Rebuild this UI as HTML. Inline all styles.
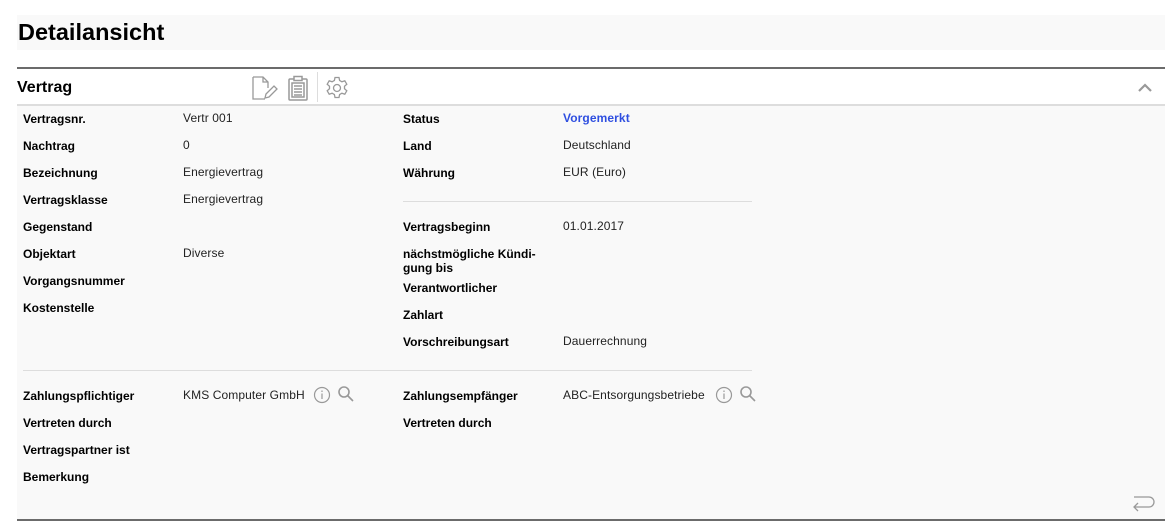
<!DOCTYPE html>
<html><head><meta charset="utf-8"><style>
*{margin:0;padding:0;box-sizing:border-box}
body{width:1168px;height:527px;background:#fff;font-family:"Liberation Sans",Arial,sans-serif;position:relative;overflow:hidden;color:#000}
.a{position:absolute;white-space:nowrap}
.l{font-size:12px;font-weight:bold;line-height:14px}
.v{font-size:12px;line-height:14px;color:#222;letter-spacing:0.1px}
</style></head><body>
<div class="a" style="left:17px;top:15px;width:1148px;height:35px;background:#f9f9f9"></div>
<div class="a" style="left:18px;top:19px;font-size:23.5px;font-weight:bold;line-height:26px">Detailansicht</div>
<div class="a" style="left:17px;top:67px;width:1148px;height:2px;background:#6b6b6b"></div>
<div class="a" style="left:17px;top:78px;font-size:16px;font-weight:bold;line-height:20px">Vertrag</div>
<svg class="a" style="left:251px;top:75px" width="28" height="26" viewBox="0 0 28 26" fill="none" stroke="#999" stroke-width="1.3"><path d="M2 2h10l5 5v6M12 2v5h5M2 2v22h12"/><path d="M14 23l1-4 8-8 3 3-8 8z"/></svg>
<svg class="a" style="left:287px;top:75px" width="22" height="26" viewBox="0 0 22 26" fill="none" stroke="#999" stroke-width="1.5"><rect x="2" y="4" width="18" height="21" rx="1"/><rect x="7" y="1.5" width="8" height="4" fill="#fff"/><rect x="5" y="8" width="12" height="14"/><path d="M7 11h8M7 14h8M7 17h8M7 20h8"/></svg>
<div class="a" style="left:317px;top:72px;width:1px;height:30px;background:#ddd"></div>
<svg class="a" style="left:325px;top:76px" width="24" height="24" viewBox="0 0 24 24" fill="none" stroke="#999" stroke-width="1.3"><path d="M10 1.5h4l.6 3 2.3 1.3 2.9-1 2 3.4-2.3 2.1v2.4l2.3 2.1-2 3.4-2.9-1-2.3 1.3-.6 3h-4l-.6-3-2.3-1.3-2.9 1-2-3.4 2.3-2.1v-2.4L2.2 8.2l2-3.4 2.9 1 2.3-1.3z"/><circle cx="12" cy="12" r="3.5"/></svg>
<svg class="a" style="left:1137px;top:81px" width="16" height="12" viewBox="0 0 16 12" fill="none" stroke="#999" stroke-width="2.2"><path d="M2 10l6-6 6 6"/></svg>
<div class="a" style="left:17px;top:104px;width:1148px;height:2px;background:#ddd"></div>
<div class="a" style="left:17px;top:106px;width:1148px;height:413px;background:#f9f9f9"></div>
<div class="a" style="left:17px;top:519px;width:1148px;height:2px;background:#6b6b6b"></div>
<div class="a" style="left:403px;top:201px;width:349px;height:1px;background:#ddd"></div>
<div class="a" style="left:23px;top:370px;width:729px;height:1px;background:#ddd"></div>

<div class="a l" style="left:23px;top:112px">Vertragsnr.</div><div class="a v" style="left:183px;top:111px">Vertr 001</div>
<div class="a l" style="left:23px;top:139px">Nachtrag</div><div class="a v" style="left:183px;top:138px">0</div>
<div class="a l" style="left:23px;top:166px">Bezeichnung</div><div class="a v" style="left:183px;top:165px">Energievertrag</div>
<div class="a l" style="left:23px;top:193px">Vertragsklasse</div><div class="a v" style="left:183px;top:192px">Energievertrag</div>
<div class="a l" style="left:23px;top:220px">Gegenstand</div>
<div class="a l" style="left:23px;top:247px">Objektart</div><div class="a v" style="left:183px;top:246px">Diverse</div>
<div class="a l" style="left:23px;top:274px">Vorgangsnummer</div>
<div class="a l" style="left:23px;top:301px">Kostenstelle</div>

<div class="a l" style="left:403px;top:112px">Status</div><div class="a v" style="left:563px;top:111px;color:#2f4fe0;font-weight:bold">Vorgemerkt</div>
<div class="a l" style="left:403px;top:139px">Land</div><div class="a v" style="left:563px;top:138px">Deutschland</div>
<div class="a l" style="left:403px;top:166px">Währung</div><div class="a v" style="left:563px;top:165px">EUR (Euro)</div>
<div class="a l" style="left:403px;top:220px">Vertragsbeginn</div><div class="a v" style="left:563px;top:219px">01.01.2017</div>
<div class="a l" style="left:403px;top:247px">nächstmögliche Kündi-<br>gung bis</div>
<div class="a l" style="left:403px;top:281px">Verantwortlicher</div>
<div class="a l" style="left:403px;top:308px">Zahlart</div>
<div class="a l" style="left:403px;top:335px">Vorschreibungsart</div><div class="a v" style="left:563px;top:334px">Dauerrechnung</div>

<div class="a l" style="left:23px;top:389px">Zahlungspflichtiger</div><div class="a v" style="left:183px;top:388px">KMS Computer GmbH</div>
<div class="a l" style="left:23px;top:416px">Vertreten durch</div>
<div class="a l" style="left:23px;top:443px">Vertragspartner ist</div>
<div class="a l" style="left:23px;top:470px">Bemerkung</div>
<div class="a l" style="left:403px;top:389px">Zahlungsempfänger</div><div class="a v" style="left:563px;top:388px">ABC-Entsorgungsbetriebe</div>
<div class="a l" style="left:403px;top:416px">Vertreten durch</div>

<svg class="a" style="left:313px;top:386px" width="18" height="18" viewBox="0 0 18 18" fill="none" stroke="#999" stroke-width="1.2"><circle cx="9" cy="9" r="7.5"/><path d="M9 7.5v5.5M9 4.5v1.5"/></svg>
<svg class="a" style="left:337px;top:385px" width="18" height="18" viewBox="0 0 18 18" fill="none" stroke="#999" stroke-width="1.6"><circle cx="7" cy="7" r="5"/><path d="M10.5 10.5l5.5 5.5"/></svg>
<svg class="a" style="left:715px;top:386px" width="18" height="18" viewBox="0 0 18 18" fill="none" stroke="#999" stroke-width="1.2"><circle cx="9" cy="9" r="7.5"/><path d="M9 7.5v5.5M9 4.5v1.5"/></svg>
<svg class="a" style="left:739px;top:385px" width="18" height="18" viewBox="0 0 18 18" fill="none" stroke="#999" stroke-width="1.6"><circle cx="7" cy="7" r="5"/><path d="M10.5 10.5l5.5 5.5"/></svg>
<svg class="a" style="left:1130px;top:494px" width="26" height="22" viewBox="0 0 26 22" fill="none" stroke="#999" stroke-width="1.3"><path d="M4 3h15a5 5 0 0 1 0 10H4M8 9l-4 4 4 4"/></svg>
</body></html>
